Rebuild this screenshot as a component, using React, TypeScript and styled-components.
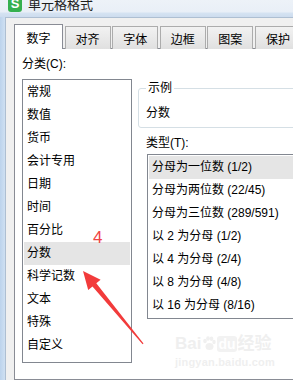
import React from "react";
import styled, { createGlobalStyle } from "styled-components";

const GlobalStyle = createGlobalStyle`
  body {
    margin: 0;
    background: #ffffff;
    font-family: "Liberation Sans", "Noto Sans CJK SC", sans-serif;
  }
`;

const categories = [
  "常规",
  "数值",
  "货币",
  "会计专用",
  "日期",
  "时间",
  "百分比",
  "分数",
  "科学记数",
  "文本",
  "特殊",
  "自定义",
];

const types = [
  "分母为一位数 (1/2)",
  "分母为两位数 (22/45)",
  "分母为三位数 (289/591)",
  "以 2 为分母 (1/2)",
  "以 4 为分母 (2/4)",
  "以 8 为分母 (4/8)",
  "以 16 为分母 (8/16)",
];

const tabs = ["数字", "对齐", "字体", "边框", "图案", "保护"];

const Window = styled.div`
  position: relative;
  width: 293px;
  height: 380px;
  overflow: hidden;
  display: flex;
  flex-direction: column;
  background: #cddcee;
  font-family: "Liberation Sans", "Noto Sans CJK SC", sans-serif;
  font-size: 12px;
  color: #000;
`;

const TitleBar = styled.div`
  flex: none;
  height: 17px;
  display: flex;
  align-items: flex-end;
  gap: 6px;
  padding: 0 0 5px 8px;
  box-sizing: border-box;
  overflow: hidden;
  background: linear-gradient(#edf2f8 0, #e9eff7 12px, #d5e3f2 13px, #cddcee 17px);
`;

const AppIcon = styled.span`
  flex: none;
  width: 14px;
  height: 16px;
  border-radius: 3px;
  background: #35b04f;
  color: #ffffff;
  font: bold 13px/16px "Liberation Sans", sans-serif;
  text-align: center;
`;

const TitleText = styled.span`
  font-family: "Noto Sans CJK SC", sans-serif;
  font-size: 13px;
  line-height: 16px;
  color: #1e1e1e;
  white-space: nowrap;
`;

const Body = styled.div`
  flex: 1;
  display: flex;
  min-height: 0;
`;

const FrameEdge = styled.div`
  flex: none;
  width: 5px;
  background: linear-gradient(90deg, #bcd3ec, #cfe0f2);
`;

const Dialog = styled.div`
  flex: 1;
  display: flex;
  flex-direction: column;
  min-width: 0;
  background: #f0f0f0;
  border-top: 1px solid #aebfd2;
  border-left: 1px solid #aebfd2;
  padding: 6px 0 0 8px;
`;

const TabStrip = styled.div`
  flex: none;
  height: 25px;
  display: flex;
  align-items: flex-end;
`;

const Tab = styled.div<{ $active?: boolean }>`
  position: relative;
  flex: none;
  box-sizing: border-box;
  width: ${({ $active }) => ($active ? "49px" : "46px")};
  height: ${({ $active }) => ($active ? "25px" : "23px")};
  margin-left: ${({ $active }) => ($active ? "0" : "1.6px")};
  border: 1px solid ${({ $active }) => ($active ? "#898c95" : "#acacac")};
  border-bottom: none;
  background: ${({ $active }) =>
    $active ? "#ffffff" : "linear-gradient(#f2f2f2, #e0e0e0)"};
  z-index: ${({ $active }) => ($active ? 1 : 0)};
  display: flex;
  align-items: center;
  justify-content: center;
  font-size: 12px;
  white-space: nowrap;
`;

const Pane = styled.div`
  flex: 1;
  margin-top: -1px;
  background: #ffffff;
  border: 1px solid #898c95;
  border-right: none;
  padding: 7px 0 0 7px;
`;

const FieldLabel = styled.div<{ $indent?: number }>`
  height: 16px;
  line-height: 16px;
  margin-left: ${({ $indent }) => $indent ?? 0}px;
  white-space: nowrap;
`;

const Columns = styled.div`
  display: flex;
  gap: 6px;
  margin-top: 7px;
`;

const ListBox = styled.div<{ $width: number; $height: number; $indent?: number }>`
  flex: none;
  box-sizing: border-box;
  width: ${({ $width }) => $width}px;
  height: ${({ $height }) => $height}px;
  margin-left: ${({ $indent }) => $indent ?? 0}px;
  border: 1px solid #828790;
  padding: 1px;
  overflow: hidden;
`;

const ListItem = styled.div<{ $selected?: boolean }>`
  height: 23px;
  line-height: 23px;
  padding-left: 3px;
  white-space: nowrap;
  background: ${({ $selected }) => ($selected ? "#e5e5e5" : "transparent")};
`;

const RightColumn = styled.div`
  flex: none;
  width: 175px;
  margin-top: 2px;
`;

const GroupBox = styled.fieldset`
  margin: 0;
  min-inline-size: 0;
  border: 1px solid #d5dfe5;
  border-radius: 3px;
  padding: 10px 7px 6px 7px;
`;

const GroupLegend = styled.legend`
  padding: 0 2px;
  line-height: 14px;
`;

const SampleText = styled.div`
  line-height: 16px;
`;

const TypeSection = styled.div`
  margin-top: 7px;
`;

const TypeList = styled(ListBox)`
  margin-top: 3px;
  border-right: none;
`;

const StepNumber = styled.div`
  position: absolute;
  left: 93px;
  top: 229px;
  font: 17px/17px "Liberation Sans", sans-serif;
  color: #f04444;
`;

const Overlay = styled.svg`
  position: absolute;
  left: 0;
  top: 0;
  pointer-events: none;
`;

const Watermark = styled.div`
  position: absolute;
  left: 175px;
  top: 334px;
  display: flex;
  flex-direction: column;
  align-items: flex-start;
  color: #efefef;
  pointer-events: none;
`;

const WatermarkBrand = styled.div`
  display: flex;
  align-items: center;
  gap: 1px;
  font: bold 17px/20px "Liberation Sans", "Noto Sans CJK SC", sans-serif;
  white-space: nowrap;
`;

const WatermarkDu = styled.span`
  background: #f2f2f2;
  color: #ffffff;
  border-radius: 3px;
  padding: 0 1px;
  font-size: 14px;
  line-height: 16px;
`;

const WatermarkUrl = styled.div`
  font: bold 11px/14px "Liberation Sans", sans-serif;
  letter-spacing: 0.2px;
  margin-top: 1px;
`;

export default function App() {
  return (
    <>
      <GlobalStyle />
      <Window>
        <TitleBar>
          <AppIcon>S</AppIcon>
          <TitleText>单元格格式</TitleText>
        </TitleBar>
        <Body>
          <FrameEdge />
          <Dialog>
            <TabStrip>
              {tabs.map((t, i) => (
                <Tab key={t} $active={i === 0}>
                  {t}
                </Tab>
              ))}
            </TabStrip>
            <Pane>
              <FieldLabel>分类(C):</FieldLabel>
              <Columns>
                <ListBox $width={110} $height={284}>
                  {categories.map((c) => (
                    <ListItem key={c} $selected={c === "分数"}>
                      {c}
                    </ListItem>
                  ))}
                </ListBox>
                <RightColumn>
                  <GroupBox>
                    <GroupLegend>示例</GroupLegend>
                    <SampleText>分数</SampleText>
                  </GroupBox>
                  <TypeSection>
                    <FieldLabel $indent={8}>类型(T):</FieldLabel>
                    <TypeList $width={170} $height={165} $indent={9}>
                      {types.map((t, i) => (
                        <ListItem key={t} $selected={i === 0}>
                          {t}
                        </ListItem>
                      ))}
                    </TypeList>
                  </TypeSection>
                </RightColumn>
              </Columns>
            </Pane>
          </Dialog>
        </Body>

        <StepNumber>4</StepNumber>
        <Overlay width="293" height="380" viewBox="0 0 293 380">
          <polygon
            points="83,271 100.6,279.8 96.3,283.3 143.5,343.5 142.6,344.2 92.5,286.5 88.2,290"
            fill="#f23b3b"
          />
        </Overlay>

        <Watermark>
          <WatermarkBrand>
            <span>Bai</span>
            <svg width="14" height="16" viewBox="0 0 14 16">
              <g fill="#f0f0f0">
                <ellipse cx="3" cy="5" rx="1.8" ry="2.3" />
                <ellipse cx="6" cy="2.5" rx="1.8" ry="2.3" />
                <ellipse cx="9.5" cy="2.8" rx="1.8" ry="2.3" />
                <ellipse cx="12" cy="6" rx="1.7" ry="2.2" />
                <ellipse cx="7.5" cy="10.5" rx="4" ry="3.5" />
              </g>
            </svg>
            <WatermarkDu>du</WatermarkDu>
            <span>经验</span>
          </WatermarkBrand>
          <WatermarkUrl>jingyan.baidu.com</WatermarkUrl>
        </Watermark>
      </Window>
    </>
  );
}
